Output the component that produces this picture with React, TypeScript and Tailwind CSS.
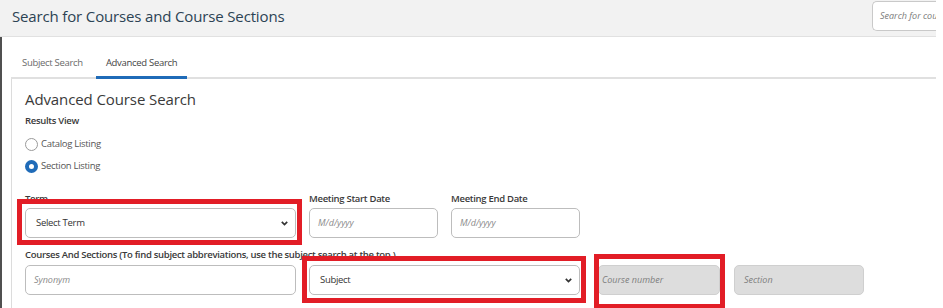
import React from "react";

const Chevron = () => (
  <svg width="7" height="5" viewBox="0 0 7 5" className="shrink-0 mr-[1px]">
    <path d="M0.8 0.9 L3.5 3.6 L6.2 0.9" fill="none" stroke="#333" strokeWidth="1.7" />
  </svg>
);

const RedBox = ({ cls }: { cls: string }) => (
  <span className={`pointer-events-none absolute border-[5px] border-[#e21d26] ${cls}`} />
);

export default function App() {
  return (
    <div
      className="w-[943px] h-[308px] overflow-hidden bg-white text-[#333]"
      style={{ fontFamily: '"Open Sans", "Liberation Sans", sans-serif' }}
    >
      <div className="w-[936px] h-[308px] overflow-hidden flex flex-col">
        {/* header */}
        <div className="h-[37px] shrink-0 bg-[#f2f2f2] border-b border-[#e1e1e1] flex items-center justify-between pl-[12px] overflow-hidden">
          <div className="text-[15px] leading-[21px] tracking-[-0.15px] text-[#2c4354] mt-[-4px] whitespace-nowrap">
            Search for Courses and Course Sections
          </div>
          <div className="w-[64px] h-[30px] mt-[-4px] bg-white border border-r-0 border-[#c9c9c9] rounded-l-[5px] flex items-center pl-[7px] overflow-hidden">
            <span className="text-[9px] italic text-[#7a7a7a] whitespace-nowrap">Search for cou</span>
          </div>
        </div>

        <div className="flex flex-1">
          <div className="w-[2px] bg-[#505050] shrink-0" />
          <div className="flex-1 pl-[9px] flex flex-col">
            {/* tabs */}
            <div className="mt-[11px] flex border-b-2 border-[#e0e0e0]">
              <div className="h-[29px] pl-[11px] pr-[13px] pt-[1px] flex items-center text-[9.5px] tracking-[-0.3px] text-[#6a6a6a]">
                Subject Search
              </div>
              <div className="relative h-[29px] px-[10px] pt-[1px] flex items-center text-[9.5px] tracking-[-0.3px] text-[#444]">
                Advanced Search
                <span className="absolute left-0 right-0 bottom-[-2px] h-[3px] bg-[#1f6bb8]" />
              </div>
            </div>

            {/* panel */}
            <div className="flex-1 border-l border-[#dcdcdc] pl-[13px] pt-[9px]">
              <div className="text-[15px] leading-[23px] tracking-[-0.1px] text-[#3a3a3a]">Advanced Course Search</div>
              <div className="mt-[2px] text-[9.5px] tracking-[-0.3px] leading-[16px] font-semibold text-[#3a3a3a]">Results View</div>
              <div className="mt-[4px] h-[22px] flex items-center gap-[3px]">
                <span className="w-[13px] h-[13px] rounded-full border border-[#9a9a9a] bg-white" />
                <span className="text-[9.5px] tracking-[-0.3px] text-[#555]">Catalog Listing</span>
              </div>
              <div className="h-[22px] flex items-center gap-[3px]">
                <span className="w-[13px] h-[13px] rounded-full border-[4px] border-[#1f6bb8] bg-white" />
                <span className="text-[9.5px] tracking-[-0.3px] text-[#555]">Section Listing</span>
              </div>

              {/* row 1 */}
              <div className="mt-[14px] flex items-start">
                <div className="w-[271px] flex flex-col">
                  <div className="h-[16px] text-[9.5px] tracking-[-0.3px] leading-[16px] font-semibold text-[#3a3a3a]">Term</div>
                  <div className="relative mt-[1px]">
                    <div className="h-[30px] border border-[#bdbdbd] rounded-[5px] bg-white flex items-center justify-between pl-[10px] pr-[6px]">
                      <span className="text-[9.5px] tracking-[-0.3px] text-[#333]">Select Term</span>
                      <Chevron />
                    </div>
                    <RedBox cls="left-[-8px] right-[-6px] top-[-9px] bottom-[-7px]" />
                  </div>
                </div>
                <div className="w-[129px] ml-[13px] flex flex-col">
                  <div className="h-[16px] text-[9.5px] tracking-[-0.3px] leading-[16px] font-semibold text-[#3a3a3a] whitespace-nowrap">Meeting Start Date</div>
                  <div className="mt-[1px] h-[30px] border border-[#bdbdbd] rounded-[5px] bg-white flex items-center pl-[8px]">
                    <span className="text-[9px] italic text-[#8a8a8a]">M/d/yyyy</span>
                  </div>
                </div>
                <div className="w-[129px] ml-[13px] flex flex-col">
                  <div className="h-[16px] text-[9.5px] tracking-[-0.3px] leading-[16px] font-semibold text-[#3a3a3a] whitespace-nowrap">Meeting End Date</div>
                  <div className="mt-[1px] h-[30px] border border-[#bdbdbd] rounded-[5px] bg-white flex items-center pl-[8px]">
                    <span className="text-[9px] italic text-[#8a8a8a]">M/d/yyyy</span>
                  </div>
                </div>
              </div>

              {/* row 2 */}
              <div className="mt-[9px] h-[16px] text-[9.5px] tracking-[-0.3px] leading-[16px] font-semibold text-[#3a3a3a] whitespace-nowrap">
                Courses And Sections (To find subject abbreviations, use the subject search at the top )
              </div>
              <div className="mt-[2px] flex items-start">
                <div className="w-[271px] h-[30px] border border-[#bdbdbd] rounded-[5px] bg-white flex items-center pl-[8px]">
                  <span className="text-[9px] italic text-[#8a8a8a]">Synonym</span>
                </div>
                <div className="relative w-[271px] ml-[13px]">
                  <div className="h-[30px] border border-[#bdbdbd] rounded-[5px] bg-white flex items-center justify-between pl-[10px] pr-[6px]">
                    <span className="text-[9.5px] tracking-[-0.3px] text-[#333]">Subject</span>
                    <Chevron />
                  </div>
                  <RedBox cls="left-[-7px] right-[-6px] top-[-9px] bottom-[-8px]" />
                </div>
                <div className="relative w-[122px] ml-[18px]">
                  <div className="h-[30px] border border-[#cfcfcf] rounded-[5px] bg-[#dddddd] flex items-center pl-[3px]">
                    <span className="text-[9px] italic text-[#7d7d7d]">Course number</span>
                  </div>
                  <RedBox cls="left-[-4px] right-[-5px] top-[-11px] bottom-[-14px]" />
                </div>
                <div className="w-[130px] ml-[14px] h-[30px] border border-[#cfcfcf] rounded-[5px] bg-[#dddddd] flex items-center pl-[9px]">
                  <span className="text-[9px] italic text-[#7d7d7d]">Section</span>
                </div>
              </div>
            </div>
          </div>
        </div>
      </div>
    </div>
  );
}
